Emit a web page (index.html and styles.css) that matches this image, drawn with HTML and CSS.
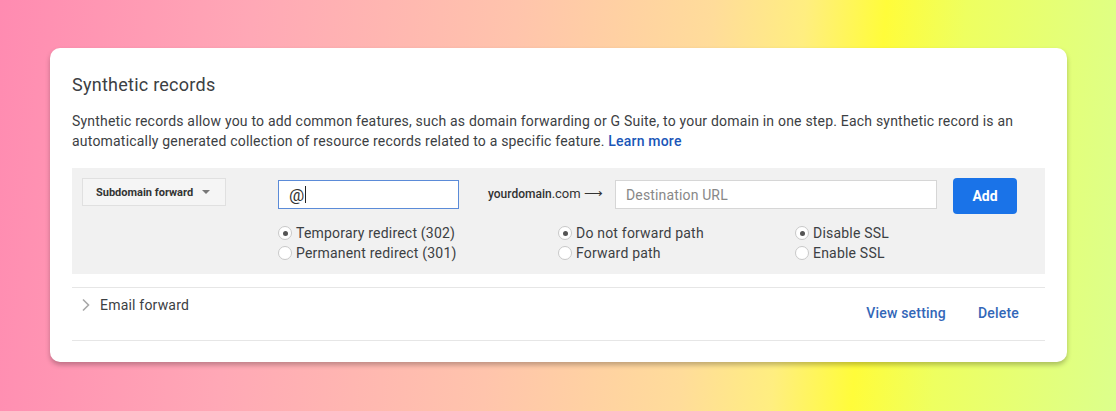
FILE: index.html
```html
<!DOCTYPE html>
<html>
<head>
<meta charset="utf-8">
<link rel="stylesheet" href="styles.css">
</head>
<body>
<div class="card">
  <h2 class="title">Synthetic records</h2>
  <p class="desc">Synthetic records allow you to add common features, such as domain forwarding or G Suite, to your domain in one step. Each synthetic record is an automatically generated collection of resource records related to a specific feature. <a class="link">Learn more</a></p>
  <div class="panel">
    <div class="row-top">
      <div class="select">Subdomain forward <span class="caret"></span></div>
      <div class="input at">@<span class="cursor"></span></div>
      <div class="domain"><b>yourdomain</b>.com &#10230;</div>
      <div class="input dest">Destination URL</div>
      <button class="add">Add</button>
    </div>
    <div class="row-radios">
      <div class="group g1">
        <label class="radio"><span class="dot on"></span>Temporary redirect (302)</label>
        <label class="radio"><span class="dot"></span>Permanent redirect (301)</label>
      </div>
      <div class="group g2">
        <label class="radio"><span class="dot on"></span>Do not forward path</label>
        <label class="radio"><span class="dot"></span>Forward path</label>
      </div>
      <div class="group g3">
        <label class="radio"><span class="dot on"></span>Disable SSL</label>
        <label class="radio"><span class="dot"></span>Enable SSL</label>
      </div>
    </div>
  </div>
  <div class="record">
    <div class="rec-left">
      <svg class="chev" width="10" height="14" viewBox="0 0 10 14"><path d="M2 1.5 L7.5 7 L2 12.5" fill="none" stroke="#a8a8a8" stroke-width="1.6"/></svg>
      <span class="rec-name">Email forward</span>
    </div>
    <div class="rec-actions">
      <a class="action">View setting</a>
      <a class="action">Delete</a>
    </div>
  </div>
</div>
</body>
</html>
```
FILE: styles.css
```css
html, body { margin: 0; padding: 0; }
body {
  width: 1116px;
  height: 411px;
  overflow: hidden;
  font-family: Roboto, "Liberation Sans", Arial, sans-serif;
  background: linear-gradient(95deg, #ff8bb1 0%, #ffa8b6 22%, #ffc4ac 45%, #ffdc9a 62%, #ffee80 70%, #fffc3a 77%, #eeff60 84%, #dcff8c 100%);
  padding: 48px 0 0 50px;
  box-sizing: border-box;
}
.card {
  width: 1017px;
  height: 314px;
  background: #fff;
  border-radius: 10px;
  box-shadow: 0 3px 5px rgba(0,0,0,0.25);
  box-sizing: border-box;
  padding: 25px 22px 0 22px;
}
.title {
  margin: 0;
  font-size: 18px;
  font-weight: 400;
  color: #3c4043;
  line-height: 24px;
  letter-spacing: 0.25px;
}
.desc {
  margin: 14px 0 0 0;
  font-size: 14px;
  line-height: 20px;
  color: #3c4043;
  letter-spacing: 0.2px;
}
.link { color: #1a56b8; font-weight: 500; display: inline-block; }
.panel {
  margin-top: 17px;
  background: #f1f1f1;
  height: 106px;
  box-sizing: border-box;
  padding: 10px 0 0 10px;
}
.row-top {
  display: flex;
  align-items: flex-start;
  height: 36px;
}
.select {
  width: 144px;
  height: 28px;
  box-sizing: border-box;
  border: 1px solid #e0e0e0;
  background: #f5f5f5;
  font-size: 11px;
  font-weight: 700;
  color: #333;
  display: flex;
  align-items: center;
  padding-left: 13px;
}
.caret {
  display: inline-block;
  width: 0; height: 0;
  border-left: 4px solid transparent;
  border-right: 4px solid transparent;
  border-top: 4px solid #777;
  margin-left: 9px;
}
.input {
  height: 29px;
  box-sizing: border-box;
  background: #fff;
  font-size: 15px;
  display: flex;
  align-items: center;
  margin-top: 2px;
}
.at {
  width: 181px;
  margin-left: 52px;
  border: 1px solid #5b8bd8;
  padding-left: 10px;
  color: #333;
  font-size: 17px;
}
.cursor { display: inline-block; width: 1px; height: 17px; background: #222; margin-left: 1px; }
.domain {
  margin-left: 29px;
  font-size: 13px;
  color: #333;
  margin-top: 8px;
  width: 127px;
}
.domain b { font-weight: 500; font-size: 12px; }
.dest {
  width: 322px;
  border: 1px solid #d6d6d6;
  color: #888;
  padding-left: 10px;
  font-size: 14px;
  letter-spacing: 0.15px;
}
.add {
  margin-left: 16px;
  width: 64px;
  height: 36px;
  background: #1a73e8;
  border: none;
  border-radius: 4px;
  color: #fff;
  font-family: inherit;
  font-size: 14px;
  font-weight: 700;
  padding: 0;
}
.row-radios {
  display: flex;
  margin-top: 9px;
}
.group { display: flex; flex-direction: column; }
.g1 { margin-left: 196px; width: 280px; }
.g2 { width: 237px; }
.radio {
  display: flex;
  align-items: center;
  font-size: 14px;
  color: #3c4043;
  height: 20px;
  letter-spacing: 0.2px;
}
.dot {
  width: 14px; height: 14px;
  box-sizing: border-box;
  border-radius: 50%;
  border: 1px solid #c8c8c8;
  background: #fff;
  margin-right: 4px;
  position: relative;
}
.dot.on::after {
  content: "";
  position: absolute;
  left: 3.5px; top: 3.5px;
  width: 5px; height: 5px;
  border-radius: 50%;
  background: #555;
}
.record {
  margin-top: 13px;
  border-top: 1px solid #e6e6e6;
  border-bottom: 1px solid #e6e6e6;
  height: 54px;
  box-sizing: border-box;
  display: flex;
  justify-content: space-between;
}
.rec-left {
  display: flex;
  align-items: center;
  height: 34px;
  padding-left: 9px;
}
.chev { margin-right: 9px; }
.rec-name { font-size: 14px; color: #3c4043; letter-spacing: 0.2px; }
.rec-actions {
  display: flex;
  align-items: center;
  padding-top: 15px;
  height: 20px;
  padding-right: 26px;
}
.action {
  color: #3367b8;
  font-size: 14px;
  font-weight: 500;
  margin-left: 32px;
  letter-spacing: 0.2px;
}
```
